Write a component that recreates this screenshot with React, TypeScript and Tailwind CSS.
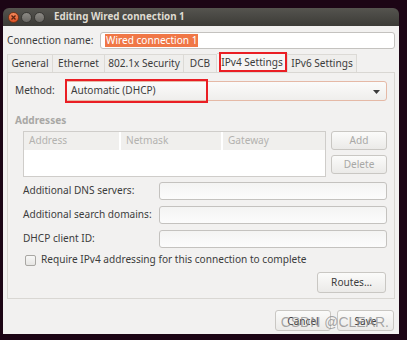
import React from "react";

const font = { fontFamily: '"Noto Sans", "Open Sans", sans-serif' };

function Btn({ children, className = "", disabled = false }: { children: React.ReactNode; className?: string; disabled?: boolean }) {
  return (
    <div
      className={`flex items-center justify-center whitespace-nowrap rounded-[3px] border border-[#c9c7c3] bg-gradient-to-b from-[#fbfbfa] to-[#ebeae8] ${disabled ? "text-[#a8a8a6]" : "text-[#3c3c3c]"} ${className}`}
    >
      {children}
    </div>
  );
}

function Input({ className = "" }: { className?: string }) {
  return <div className={`rounded-[3px] border border-[#c4c2bf] bg-gradient-to-b from-[#f4f4f3] to-[#fcfcfc] ${className}`} />;
}

export default function App() {
  const tabs = [
    { label: "General", w: 46 },
    { label: "Ethernet", w: 52 },
    { label: "802.1x Security", w: 79 },
    { label: "DCB", w: 33 },
    { label: "IPv4 Settings", w: 71, active: true },
    { label: "IPv6 Settings", w: 69 },
  ];
  return (
    <div className="w-[407px] h-[340px] overflow-hidden bg-[#1c0515] pt-[8px] pl-[3px] whitespace-nowrap text-[10.1px]" style={font}>
      <div className="w-[396px] h-[326px] flex flex-col rounded-t-[6px] overflow-hidden">
        {/* title bar */}
        <div className="h-[18px] flex items-center bg-gradient-to-b from-[#55544f] to-[#3c3b37] pl-[5px]">
          <div className="w-[11px] h-[11px] rounded-full bg-gradient-to-b from-[#f58a5c] to-[#df4f22] border border-[#7a3517] flex items-center justify-center">
            <svg width="7" height="7" viewBox="0 0 7 7">
              <path d="M1.5 1.5 L5.5 5.5 M5.5 1.5 L1.5 5.5" stroke="#5a2410" strokeWidth="1.3" />
            </svg>
          </div>
          <div className="ml-[2px] w-[11px] h-[11px] rounded-full bg-gradient-to-b from-[#8c8a85] to-[#6a6864] border border-[#3a3935]" />
          <div className="ml-[2px] w-[11px] h-[11px] rounded-full bg-gradient-to-b from-[#8c8a85] to-[#6a6864] border border-[#3a3935]" />
          <div className="ml-[9px] text-[9.8px] font-bold text-[#dfdbd2] leading-none">Editing Wired connection 1</div>
        </div>
        {/* body */}
        <div className="flex-1 bg-[#f2f1f0] flex flex-col px-[4px] pt-[6px]">
          <div className="flex items-center h-[17px]">
            <div className="w-[93px] text-[#3c3c3c]">Connection name:</div>
            <div className="w-[295px] h-[17px] rounded-[3px] border border-[#c4c2bf] bg-white flex items-center pl-[4px]">
              <span className="bg-[#f07746] text-white leading-[13px] px-[1px]">Wired connection 1</span>
            </div>
          </div>
          {/* tabs */}
          <div className="flex h-[19px] mt-[4px] items-end">
            {tabs.map((t) => (
              <div
                key={t.label}
                style={{ width: t.w }}
                className={`relative flex items-center justify-center text-[#3c3c3c] border-t border-r border-[#dcdad6] ${t.label === "General" ? "border-l" : ""} ${t.active ? "bg-[#f6f5f4] h-[19px]" : "bg-[#efeeec] h-[18px]"}`}
              >
                {t.label}
                {t.active && <div className="absolute left-[2px] -top-[2px] w-[68px] h-[20px] border-2 border-[#ea1e24]" />}
              </div>
            ))}
          </div>
          {/* panel */}
          <div className="w-[388px] h-[227px] border border-[#d9d7d3] flex flex-col">
            <div className="flex items-center mt-[8px] h-[20px]">
              <div className="w-[57px] pl-[7px] text-[#3c3c3c]">Method:</div>
              <div className="relative w-[322px] h-[20px] rounded-[3px] border border-[#e5b9a6] bg-gradient-to-b from-[#fbfbfa] to-[#efeeec] flex items-center pl-[5px] text-[#3c3c3c]">
                Automatic (DHCP)
                <svg className="absolute right-[6px] top-[8px]" width="7" height="4" viewBox="0 0 7 4">
                  <path d="M0 0 L7 0 L3.5 4 Z" fill="#3c3c3c" />
                </svg>
                <div className="absolute -left-[1px] -top-[3px] w-[143px] h-[24px] border-2 border-[#ea1e24]" />
              </div>
            </div>
            <div className="mt-[12px] pl-[7px] font-bold text-[#a9a8a5] h-[14px] leading-[14px]">Addresses</div>
            <div className="flex mt-[4px] pl-[15px]">
              <div className="w-[303px] h-[46px] border border-[#cfcdca] bg-white flex flex-col">
                <div className="flex h-[18px] bg-[#f0efed] text-[#b3b2af]">
                  <div className="w-[97px] pl-[5px] flex items-center border-r-2 border-white">Address</div>
                  <div className="w-[102px] pl-[5px] flex items-center border-r-2 border-white">Netmask</div>
                  <div className="flex-1 pl-[5px] flex items-center">Gateway</div>
                </div>
              </div>
              <div className="ml-[5px] flex flex-col">
                <Btn disabled className="w-[56px] h-[19px]">Add</Btn>
                <Btn disabled className="w-[56px] h-[19px] mt-[5px]">Delete</Btn>
              </div>
            </div>
            <div className="flex flex-col pl-[15px] mt-[5px] gap-[6px]">
              {["Additional DNS servers:", "Additional search domains:", "DHCP client ID:"].map((l) => (
                <div key={l} className="flex items-center h-[18px]">
                  <div className="w-[136px] text-[#3c3c3c]">{l}</div>
                  <Input className="w-[228px] h-[18px]" />
                </div>
              ))}
            </div>
            <div className="flex items-center mt-[6px] pl-[17px] h-[12px]">
              <div className="w-[11px] h-[11px] rounded-[2px] border border-[#a9a7a3] bg-gradient-to-b from-[#f8f8f7] to-[#e6e5e3]" />
              <div className="ml-[5px] text-[#3c3c3c]">Require IPv4 addressing for this connection to complete</div>
            </div>
            <div className="flex justify-end pr-[8px] mt-[6px]">
              <Btn className="w-[69px] h-[21px]">Routes…</Btn>
            </div>
          </div>
          <div className="relative flex justify-end mt-[11px] pr-[1px] gap-[6px]">
            <Btn className="w-[56px] h-[21px] items-start pt-[3px]">Cancel</Btn>
            <Btn className="w-[57px] h-[21px] items-start pt-[3px]">Save</Btn>
            <div className="absolute right-[6px] top-[5px] text-[14px] leading-none text-[#8a8a8a]/75" style={{ fontFamily: '"Liberation Sans", sans-serif' }}>CSDN @CLEAR.</div>
          </div>
        </div>
      </div>
    </div>
  );
}
